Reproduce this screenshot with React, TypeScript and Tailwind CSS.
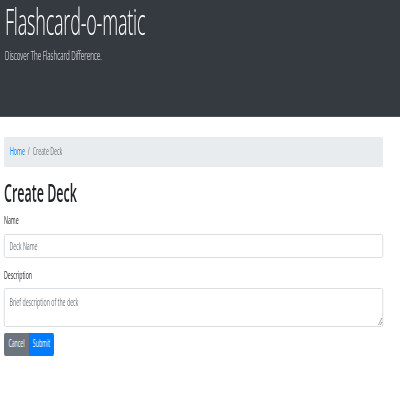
import React from "react";

export default function App() {
  return (
    <div className="w-[400px] h-[400px] overflow-hidden bg-white" style={{ fontFamily: '"Open Sans", "Liberation Sans", sans-serif' }}>
      <div className="w-[800px] origin-top-left scale-x-50 flex flex-col">
        <header className="h-[117px] bg-[#343a40] text-white px-[10px] border-b border-[#4a5056]">
          <h1 className="text-[36px] leading-[1.2] font-light tracking-[-0.4px]">Flashcard-o-matic</h1>
          <p className="mt-[4px] text-[12.5px] leading-[1.5] font-light">Discover The Flashcard Difference.</p>
        </header>
        <div className="px-[8px] flex flex-col w-[774px]">
          <nav className="mt-[20px] h-[30px] bg-[#e9ecef] rounded-[3px] flex items-center px-[12px] text-[10.5px]">
            <span className="text-[#007bff]">Home</span>
            <span className="text-[#6c757d] px-[6px]">/</span>
            <span className="text-[#6c757d]">Create Deck</span>
          </nav>
          <h2 className="mt-[10px] text-[25px] leading-[1.2] font-semibold text-[#212529]">Create Deck</h2>
          <label className="mt-[6px] text-[10.5px] leading-[1.5] text-[#212529]">Name</label>
          <input
            className="mt-[5px] h-[24px] border border-[#ced4da] rounded-[3px] px-[10px] text-[10.5px] placeholder:text-[#6c757d] outline-none"
            placeholder="Deck Name"
          />
          <label className="mt-[10px] text-[10.5px] leading-[1.5] text-[#212529]">Description</label>
          <textarea
            className="mt-[4px] h-[39px] border border-[#ced4da] rounded-[3px] px-[10px] py-[6px] text-[10.5px] placeholder:text-[#6c757d] outline-none resize-y"
            placeholder="Brief description of the deck"
          />
          <div className="mt-[6px] flex">
            <button className="w-[50px] h-[23px] bg-[#6c757d] text-white text-[10.5px] rounded-l-[3px]">Cancel</button>
            <button className="w-[50px] h-[23px] bg-[#007bff] text-white text-[10.5px] rounded-r-[3px]">Submit</button>
          </div>
        </div>
      </div>
    </div>
  );
}
